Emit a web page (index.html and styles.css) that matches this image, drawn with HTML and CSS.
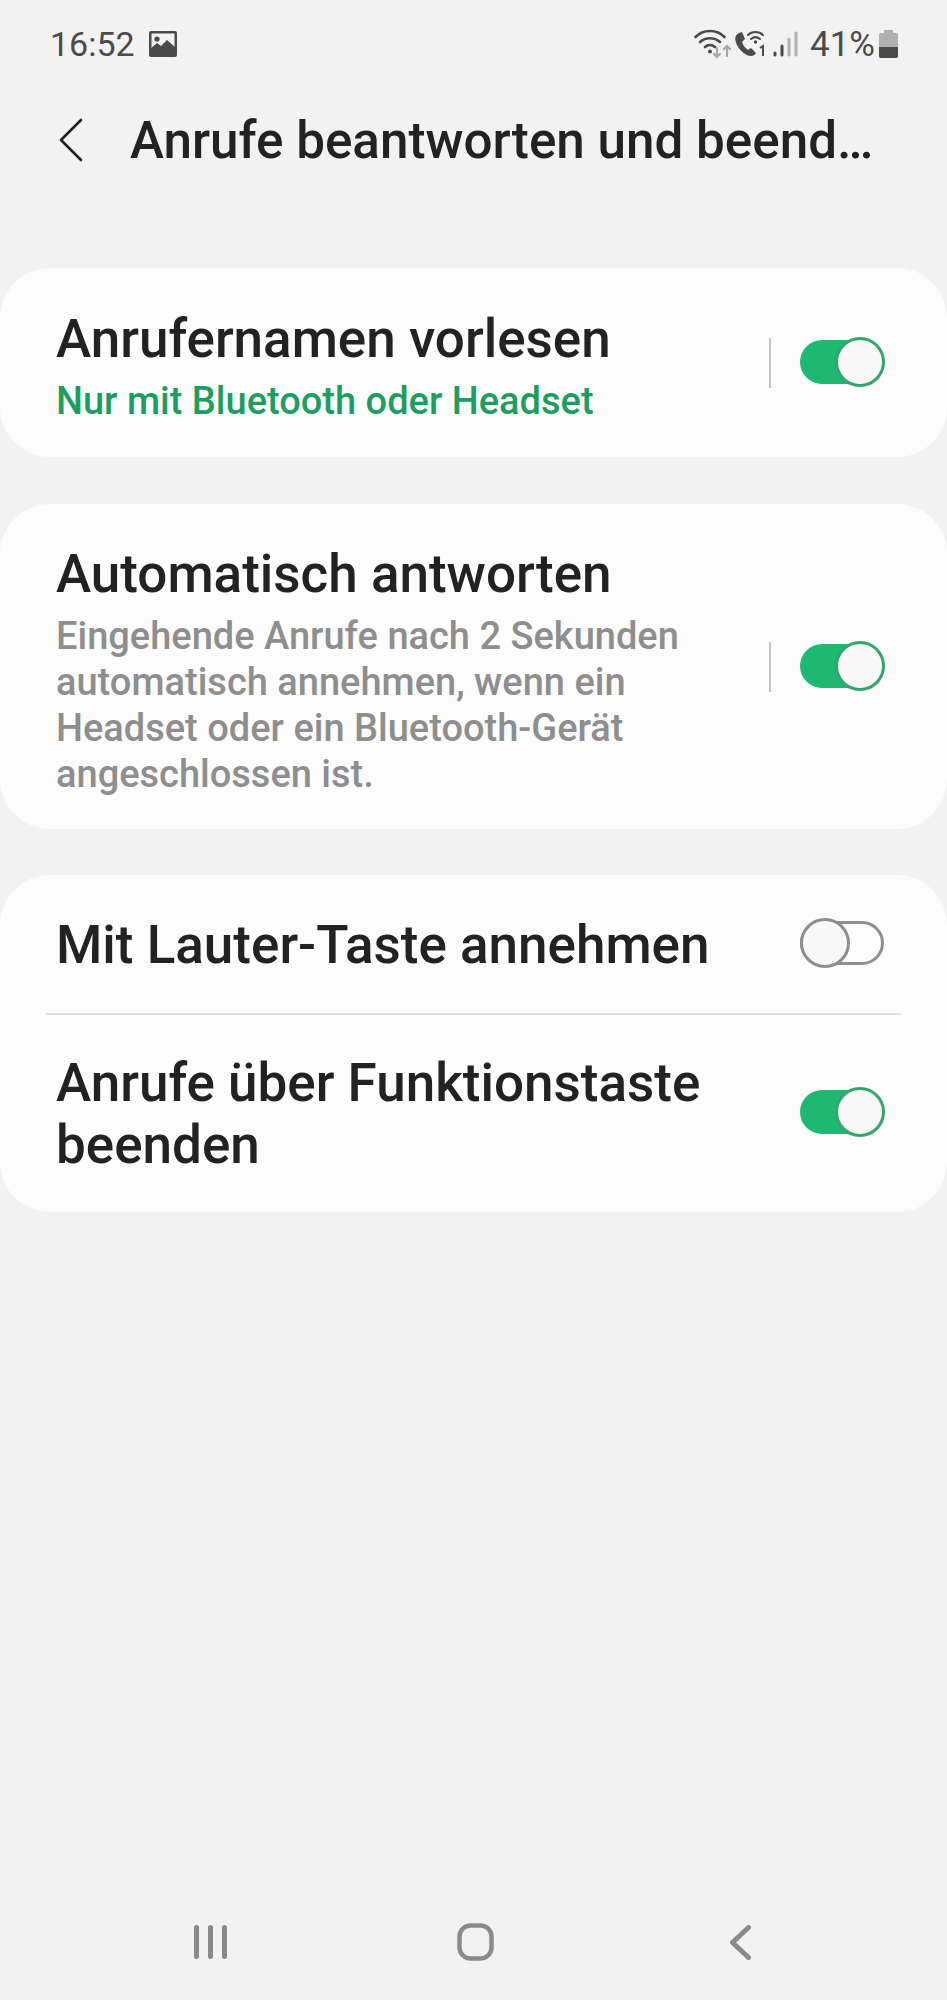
FILE: index.html
```html
<!DOCTYPE html>
<html lang="de">
<head>
    <meta charset="UTF-8">
    <meta name="viewport" content="width=device-width, initial-scale=1.0">
    <title>Anrufe beantworten und beenden</title>
    <link rel="stylesheet" href="styles.css">
</head>
<body>
    <div class="screen">
        <div class="status-bar">
            <div class="status-left">
                <span class="clock">16:52</span>
                <svg class="icon-picture" width="28" height="26" viewBox="0 0 28 26">
                    <rect x="0" y="0" width="28" height="26" rx="2" fill="#4a4a4a"/>
                    <rect x="2.500" y="2.500" width="23" height="21" fill="#f2f2f2"/>
                    <circle cx="8" cy="8" r="2.600" fill="#4a4a4a"/>
                    <path d="M1 24V18L8 12L12 15L18 9L27 17V24Z" fill="#4a4a4a"/>
                </svg>
            </div>
            <div class="status-right">
                <svg class="icon-wifi" width="37" height="30" viewBox="0 0 37 30" fill="none" stroke="#4a4a4a" stroke-width="2.600" stroke-linecap="round">
                    <path d="M1.500 8C9 0 23 0 30.500 8"/>
                    <path d="M6 13C12 8 20 8 26 13"/>
                    <path d="M11 18C14 15.500 18 15.500 21 18"/>
                    <circle cx="16" cy="22.500" r="2" fill="#4a4a4a" stroke="none"/>
                    <path d="M23 19V28M20 25L23 28L26 25" stroke="#a6a6a6" stroke-width="2.200"/>
                    <path d="M33 27V17M30 20L33 17L36 20" stroke="#a6a6a6" stroke-width="2.200"/>
                </svg>
                <svg class="icon-call" width="32" height="26" viewBox="0 0 32 26">
                    <path d="M4 2C0 4 -1 8 2 14C5 20 11 25 16 25C18 25 20 24 21 22L16 17L13 19C10 17 8 14 7 11L10 8L7 1Z" fill="#4a4a4a"/>
                    <g fill="none" stroke="#4a4a4a" stroke-width="2" stroke-linecap="round">
                        <path d="M13 4C17 0 24 0 28 4"/>
                        <path d="M16 8C19 5.500 22 5.500 25 8"/>
                    </g>
                    <circle cx="20.500" cy="11" r="1.700" fill="#4a4a4a"/>
                    <path d="M25 17L28 15V25" fill="none" stroke="#4a4a4a" stroke-width="2"/>
                </svg>
                <svg class="icon-signal" width="25" height="26" viewBox="0 0 25 26" fill="none" stroke-width="3" stroke-linecap="round">
                    <path d="M2 22V24" stroke="#4a4a4a"/>
                    <path d="M9 15V24" stroke="#4a4a4a"/>
                    <path d="M16 8V24" stroke="#b0b0b0"/>
                    <path d="M23 2V24" stroke="#b0b0b0"/>
                </svg>
                <span class="battery-text">41%</span>
                <div class="battery">
                    <div class="battery-cap"></div>
                    <div class="battery-body"><div class="battery-level"></div></div>
                </div>
            </div>
        </div>

        <div class="app-header">
            <svg class="back" width="24" height="44" viewBox="0 0 24 44" fill="none" stroke="#222" stroke-width="2.600" stroke-linecap="round" stroke-linejoin="round">
                <path d="M22 2L2 22L22 42"/>
            </svg>
            <h1>Anrufe beantworten und beend…</h1>
        </div>

        <div class="card card-first">
            <div class="row row-first">
                <div class="row-text">
                    <div class="row-title">Anrufernamen vorlesen</div>
                    <div class="row-sub green">Nur mit Bluetooth oder Headset</div>
                </div>
                <div class="divider"></div>
                <div class="switch on"><div class="knob"></div></div>
            </div>
        </div>

        <div class="card">
            <div class="row row-second">
                <div class="row-text">
                    <div class="row-title">Automatisch antworten</div>
                    <div class="row-sub">Eingehende Anrufe nach 2 Sekunden automatisch annehmen, wenn ein Headset oder ein Bluetooth-Gerät angeschlossen ist.</div>
                </div>
                <div class="divider"></div>
                <div class="switch on"><div class="knob"></div></div>
            </div>
        </div>

        <div class="card">
            <div class="row row-third">
                <div class="row-text">
                    <div class="row-title">Mit Lauter-Taste annehmen</div>
                </div>
                <div class="switch off"><div class="knob"></div></div>
            </div>
            <div class="row-line"></div>
            <div class="row row-fourth">
                <div class="row-text">
                    <div class="row-title">Anrufe über Funktionstaste beenden</div>
                </div>
                <div class="switch on"><div class="knob"></div></div>
            </div>
        </div>

        <div class="nav-bar">
            <svg width="33" height="34" viewBox="0 0 33 34" stroke="#8a8a8a" stroke-width="5" stroke-linecap="round">
                <path d="M2.500 2.500V31.500M16.500 2.500V31.500M30.500 2.500V31.500"/>
            </svg>
            <svg class="nav-home" width="37" height="38" viewBox="0 0 37 38" fill="none" stroke="#8a8a8a" stroke-width="4.500">
                <rect x="2.500" y="2.500" width="32" height="33" rx="11"/>
            </svg>
            <svg width="21" height="35" viewBox="0 0 21 35" fill="none" stroke="#8a8a8a" stroke-width="5" stroke-linecap="round" stroke-linejoin="round">
                <path d="M18.500 2.500L2.500 17.500L18.500 32.500"/>
            </svg>
        </div>
    </div>
</body>
</html>
```

FILE: styles.css
```css
body {
    margin: 0;
    background-color: #f2f2f2;
    font-family: 'Roboto', 'Liberation Sans', sans-serif;
}
.screen {
    display: flex;
    flex-direction: column;
    height: 2000px;
    overflow: hidden;
}
.status-bar {
    display: flex;
    justify-content: space-between;
    align-items: center;
    height: 32px;
    padding: 28px 49px 0 50px;
}
.status-left {
    display: flex;
    align-items: center;
    gap: 14px;
}
.clock {
    font-size: 34px;
    font-weight: 450;
    color: #4a4a4a;
}
.status-right {
    display: flex;
    align-items: center;
}
.icon-call {
    margin-left: 4px;
}
.icon-signal {
    margin-left: 6px;
}
.battery-text {
    margin-left: 12px;
    font-size: 35px;
    font-weight: 450;
    color: #4a4a4a;
}
.battery {
    display: flex;
    flex-direction: column;
    align-items: center;
    margin-left: 4px;
}
.battery-cap {
    width: 9px;
    height: 3px;
    background-color: #b0b0b0;
}
.battery-body {
    display: flex;
    align-items: flex-end;
    width: 19px;
    height: 25px;
    border-radius: 2px;
    background-color: #b0b0b0;
    overflow: hidden;
}
.battery-level {
    width: 100%;
    height: 11px;
    background-color: #4a4a4a;
}
.app-header {
    display: flex;
    align-items: center;
    height: 76px;
    margin-top: 42px;
    padding-left: 59px;
}
.app-header h1 {
    margin: 0 0 0 47px;
    font-size: 51.200px;
    font-weight: 480;
    color: #222;
    white-space: nowrap;
}
.card {
    margin-bottom: 46px;
    border-radius: 50px;
    background-color: #fcfcfc;
}
.card-first {
    margin-top: 90px;
    margin-bottom: 47px;
}
.row {
    display: flex;
    align-items: center;
    padding: 0 63px 0 56px;
}
.row-first {
    height: 189px;
}
.row-second {
    height: 325px;
}
.row-third {
    height: 138px;
}
.row-fourth {
    height: 197px;
}
.row-text {
    flex: 1;
    min-width: 0;
    margin-top: 6px;
}
.row-third .row-text {
    margin-top: 2px;
}
.row-fourth .row-text {
    margin-top: 0;
}
.row-title {
    font-size: 53px;
    font-weight: 480;
    line-height: 62px;
    color: #222;
}
.row-sub {
    margin-top: 8px;
    padding-right: 60px;
    font-size: 38px;
    font-weight: 470;
    line-height: 46px;
    color: #8e8e8e;
}
.green {
    color: #1c9e62;
}
.divider {
    width: 2px;
    height: 50px;
    margin-right: 29px;
    background-color: #c4c4c4;
}
.row-line {
    height: 2px;
    margin: 0 46px;
    background-color: #e0e0e0;
}
.switch {
    position: relative;
    box-sizing: border-box;
    width: 84px;
    height: 44px;
    margin-bottom: 2px;
    border-radius: 22px;
}
.row-fourth .switch {
    margin-bottom: 4px;
}
.switch.on {
    background-color: #1eb873;
}
.switch.off {
    border: 3px solid #8e8e8e;
}
.knob {
    position: absolute;
    top: -3px;
    box-sizing: border-box;
    width: 50px;
    height: 50px;
    border-radius: 50%;
    background-color: #f8f8f8;
}
.switch.on .knob {
    right: -1px;
    border: 3px solid #34a56e;
}
.switch.off .knob {
    top: -6px;
    left: -3px;
    border: 3px solid #8e8e8e;
}
.nav-bar {
    display: flex;
    justify-content: space-between;
    align-items: center;
    margin-top: auto;
    margin-bottom: 38px;
    padding: 0 196px 0 194px;
    height: 40px;
}
.nav-home {
    margin-right: 6px;
}
```
